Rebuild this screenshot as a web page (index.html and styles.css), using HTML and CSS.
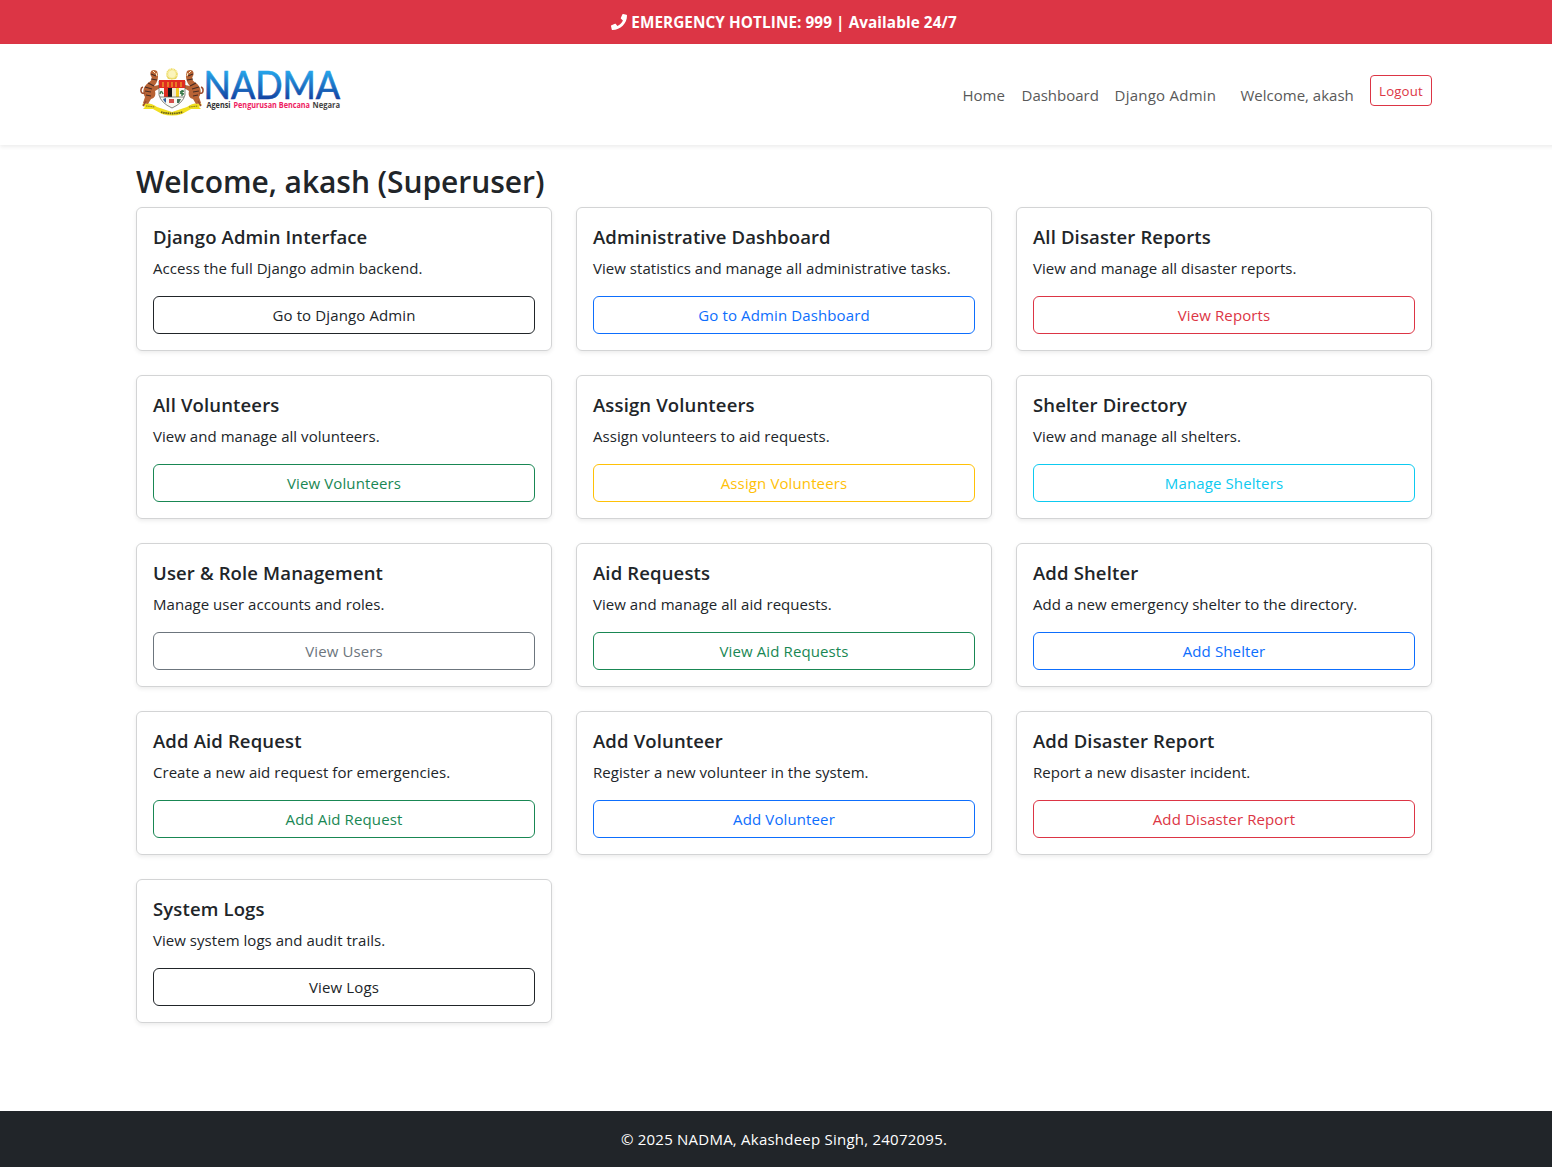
FILE: index.html
```html
<!DOCTYPE html>
<html lang="en">
<head>
<meta charset="utf-8">
<title>NADMA - Dashboard</title>
<link rel="stylesheet" href="styles.css">
</head>
<body>
<div class="hotline">
  <svg class="phone" viewBox="0 0 512 512" width="16" height="16"><path fill="currentColor" d="M493.4 24.6l-104-24c-11.3-2.6-22.9 3.3-27.5 13.9l-48 112c-4.2 9.8-1.4 21.3 6.9 28l60.6 49.6c-36 76.700-98.900 140.500-177.200 177.200l-49.600-60.600c-6.800-8.300-18.200-11.100-28-6.900l-112 48C3.900 366.500-2 378.100.6 389.400l24 104C27.100 504.200 36.700 512 48 512c256.100 0 464-207.500 464-464 0-11.200-7.700-20.900-18.600-23.400z"/></svg>
  <strong>EMERGENCY HOTLINE: 999 | Available 24/7</strong>
</div>
<header class="navbar">
  <div class="container navbar-inner">
    <a class="brand">
      <svg width="210" height="54" viewBox="0 0 210 54">
        <defs>
          <linearGradient id="sky" x1="0" y1="0" x2="0" y2="1"><stop offset=".22" stop-color="#25a5ea"/><stop offset=".85" stop-color="#123f9f"/></linearGradient>
          <g id="tiger">
            <path d="M18 5c-5-3-8 1-6 5 2 3 0 5-3 7-5 4-6 9-3 14l-2 6 5 1 3-5c4-1 5-4 4-8l5-3-1-3-5 1c4-4 5-10 3-15z" fill="#b86335"/>
            <path d="M12 8l5 2m-5 3l6 1m-9 3l6 3m-9 1l7 2m-7 2l6 1m-5 3l5 1" stroke="#482c24" stroke-width="1.100" fill="none"/>
            <path d="M6 27C1 29 1 22 4 21m3 14l-3 5" stroke="#9c4b2d" stroke-width="1.500" fill="none"/>
            <path d="M14 5l2 2m1 0l1 3" stroke="#fff0c8" stroke-width="1"/>
          </g>
        </defs>
        <g transform="translate(-1 0)">
          <path d="M3 38c5-2 11 0 15 3l15 5 15-5c4-3 10-5 15-3l-3 3 2 2-10 0-9 5q-10 3-20 0l-9-5-10 0 2-2z" fill="#f1df20"/>
          <path d="M22 46q11 3 22 0" stroke="#655e18" stroke-width="1.800" stroke-dasharray="1.500 .7" fill="none"/>
          <path d="M7 40l9 1m34 0l9-1" stroke="#8f8320" stroke-width="1.200" stroke-dasharray="1.500 .7"/>
          <use href="#tiger"/>
          <use href="#tiger" transform="translate(66 0) scale(-1 1)"/>
          <circle cx="33" cy="8" r="4.800" fill="#fbf4bb" stroke="#eedc65" stroke-width="2" stroke-dasharray="1 .5"/>
          <path d="M27 9q6 7 12 0l-2 4h-8z" fill="#e8d763"/>
          <path d="M20 15h26v14q-2 8-13 13Q22 37 20 29z" fill="#f9f9f2" stroke="#55534c" stroke-width=".7"/>
          <path d="M20 14h26v8H20z" fill="#df2c20"/>
          <path d="M24 16v5m5-5v5m4-5v5m4-5v5m5-5v5" stroke="#f1ba2c" stroke-width="1.100"/>
          <path d="M25 22h4v9h-4z" fill="#df2c20"/><path d="M29 22h4v9h-4z" fill="#161616"/><path d="M33 22h4v9h-4z" fill="#f0e9d3"/><path d="M37 22h3v9h-3z" fill="#f2cc22"/>
          <path d="M21 28q1-5 3 0m19 2v-6m-2 2l4-1m-4 2l4 1" stroke="#38784a" stroke-width="1.400" fill="none"/>
          <path d="M21 31h24" stroke="#575b55" stroke-width=".7"/>
          <path d="M24 33l3-1v5l-2-2z" fill="#315f9c"/><path d="M30 33h5v4h-5z" fill="#d44f4b"/><path d="M38 33h4l-2 4h-2z" fill="#447058"/>
        </g>
        <text class="logo-name" x="63.500" y="33" textLength="136.500" lengthAdjust="spacingAndGlyphs" fill="url(#sky)" stroke="url(#sky)">NADMA</text>
        <text class="logo-sub" x="66.500" y="42.300" textLength="24" lengthAdjust="spacingAndGlyphs" fill="#333">Agensi</text>
        <text class="logo-sub" x="93.500" y="42.300" textLength="76.500" lengthAdjust="spacingAndGlyphs" fill="#ee1c62">Pengurusan Bencana</text>
        <text class="logo-sub" x="172.500" y="42.300" textLength="27.500" lengthAdjust="spacingAndGlyphs" fill="#444">Negara</text>
      </svg>
    </a>
    <nav class="nav">
      <a class="nav-link w-home">Home</a>
      <a class="nav-link w-dash">Dashboard</a>
      <a class="nav-link w-admin">Django Admin</a>
      <span class="nav-link w-user">Welcome, akash</span>
      <a class="logout">Logout</a>
    </nav>
  </div>
</header>
<main class="container">
  <h2>Welcome, akash (Superuser)</h2>
  <div class="grid">
    <section class="card"><h5>Django Admin Interface</h5><p>Access the full Django admin backend.</p><a class="btn dark">Go to Django Admin</a></section>
    <section class="card"><h5>Administrative Dashboard</h5><p>View statistics and manage all administrative tasks.</p><a class="btn primary">Go to Admin Dashboard</a></section>
    <section class="card"><h5>All Disaster Reports</h5><p>View and manage all disaster reports.</p><a class="btn danger">View Reports</a></section>
    <section class="card"><h5>All Volunteers</h5><p>View and manage all volunteers.</p><a class="btn success">View Volunteers</a></section>
    <section class="card"><h5>Assign Volunteers</h5><p>Assign volunteers to aid requests.</p><a class="btn warning">Assign Volunteers</a></section>
    <section class="card"><h5>Shelter Directory</h5><p>View and manage all shelters.</p><a class="btn info">Manage Shelters</a></section>
    <section class="card"><h5>User &amp; Role Management</h5><p>Manage user accounts and roles.</p><a class="btn secondary">View Users</a></section>
    <section class="card"><h5>Aid Requests</h5><p>View and manage all aid requests.</p><a class="btn success">View Aid Requests</a></section>
    <section class="card"><h5>Add Shelter</h5><p>Add a new emergency shelter to the directory.</p><a class="btn primary">Add Shelter</a></section>
    <section class="card"><h5>Add Aid Request</h5><p>Create a new aid request for emergencies.</p><a class="btn success">Add Aid Request</a></section>
    <section class="card"><h5>Add Volunteer</h5><p>Register a new volunteer in the system.</p><a class="btn primary">Add Volunteer</a></section>
    <section class="card"><h5>Add Disaster Report</h5><p>Report a new disaster incident.</p><a class="btn danger">Add Disaster Report</a></section>
    <section class="card"><h5>System Logs</h5><p>View system logs and audit trails.</p><a class="btn dark">View Logs</a></section>
  </div>
</main>
<footer class="footer">© 2025 NADMA, Akashdeep Singh, 24072095.</footer>
</body>
</html>
```
FILE: styles.css
```css
* { box-sizing: border-box; }
html { overflow: hidden; }
body {
  margin: 0;
  width: 1568px;
  height: 1167px;
  display: flex;
  flex-direction: column;
  background: #fff;
  color: #212529;
  font-family: "Segoe UI", "Open Sans", "Noto Sans", sans-serif;
  font-size: 15px;
  line-height: 24px;
}
.container { width: 1320px; margin: 0 auto; padding: 0 12px; }
.hotline {
  height: 44px;
  flex: none;
  display: flex;
  align-items: center;
  justify-content: center;
  gap: 4px;
  background: #dc3545;
  color: #fff;
  font-size: 15.300px;
  letter-spacing: .08px;
}
.navbar { height: 101px; flex: none; box-shadow: 0 2px 4px rgba(0, 0, 0, .075); }
.navbar-inner { display: flex; justify-content: space-between; }
.brand { padding: 22px 0 0 4px; }
.brand svg { display: block; }
.logo-name { font-family: Lato, sans-serif; font-size: 38.500px; stroke-width: .7px; }
.logo-sub { font-family: "Open Sans", sans-serif; font-size: 8px; font-weight: 700; }
.nav { display: flex; padding-top: 31px; align-items: flex-start; }
.nav-link { padding: 8px 0; color: #595959; white-space: nowrap; }
.w-home { width: 59px; }
.w-dash { width: 93px; }
.w-admin { width: 126px; letter-spacing: .25px; }
.w-user { width: 129.500px; }
.logout {
  width: 62px;
  height: 31px;
  border: 1px solid #dc3545;
  border-radius: 4px;
  color: #dc3545;
  font-size: 13.200px;
  letter-spacing: .2px;
  line-height: 30px;
  text-align: center;
}
main { flex: 1; }
main.container { padding-top: 18px; }
h2 { margin: 0 0 6px; font-size: 30px; font-weight: 600; line-height: 38px; letter-spacing: -.06px; }
.grid { display: grid; grid-template-columns: repeat(3, 416px); gap: 24px; }
.card {
  height: 144px;
  padding: 16px;
  border: 1px solid #d3d4d5;
  border-radius: 6px;
  box-shadow: 0 2px 4px rgba(0, 0, 0, .075);
}
h5 { margin: 0 0 7px; padding-top: 1px; font-size: 18.500px; font-weight: 600; line-height: 24px; letter-spacing: .14px; }
p { margin: 0 0 16px; white-space: nowrap; letter-spacing: .04px; }
.btn {
  display: block;
  height: 38px;
  border: 1px solid currentColor;
  border-radius: 6px;
  line-height: 37px;
  letter-spacing: .12px;
  text-align: center;
}
.dark { color: #212529; }
.primary { color: #0d6efd; }
.danger { color: #dc3545; }
.success { color: #198754; }
.warning { color: #ffc107; }
.info { color: #0dcaf0; }
.secondary { color: #6c757d; }
.footer {
  height: 56px;
  flex: none;
  background: #212529;
  color: #fff;
  line-height: 56px;
  letter-spacing: .23px;
  text-align: center;
}
```
